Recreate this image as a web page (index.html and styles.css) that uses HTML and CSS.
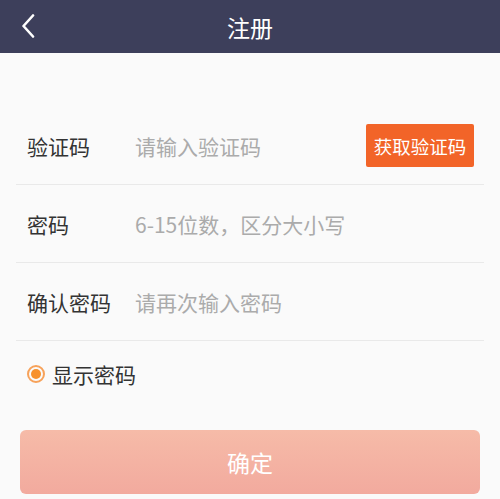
FILE: index.html
```html
<!DOCTYPE html>
<html lang="zh-CN">
<head>
  <meta charset="UTF-8">
  <title>注册</title>
  <meta name="viewport" content="width=device-width, initial-scale=1">
  <link rel="stylesheet" href="styles.css">
</head>
<body>
  <header class="topbar">
    <a class="back" href="#">
      <svg width="14" height="24" viewBox="0 0 14 24"><path d="M12 1.5 L2.5 12 L12 22.5" fill="none" stroke="#fff" stroke-width="2.6" stroke-linecap="round" stroke-linejoin="round"/></svg>
    </a>
    <h1>注册</h1>
  </header>

  <form class="form">
    <div class="fields">
      <div class="row">
        <label>验证码</label>
        <input type="text" placeholder="请输入验证码">
        <button type="button" class="code-btn">获取验证码</button>
      </div>
      <div class="row">
        <label>密码</label>
        <input type="password" placeholder="6-15位数，区分大小写">
      </div>
      <div class="row">
        <label>确认密码</label>
        <input type="password" placeholder="请再次输入密码">
      </div>
      <div class="show-pwd">
        <span class="radio"></span>
        <span>显示密码</span>
      </div>
    </div>
    <button type="submit" class="submit">确定</button>
  </form>
</body>
</html>
```

FILE: styles.css
```css
body {
  margin: 0;
  background: #fafafa;
  font-family: "Noto Sans CJK SC", "Noto Sans", sans-serif;
}
.topbar {
  height: 53px;
  background: #3d3f5b;
  display: flex;
  align-items: center;
  justify-content: center;
  position: relative;
}
.topbar h1 {
  margin: 0;
  color: #fff;
  font-size: 23px;
  font-weight: normal;
}
.back {
  position: absolute;
  left: 21px;
  top: 14px;
  display: block;
  width: 14px;
  height: 24px;
}
.form {
  margin-top: 54px;
}
.fields {
  padding: 0 16px;
}
.row {
  height: 77px;
  border-bottom: 1px solid #e9e9e9;
  display: flex;
  align-items: center;
  padding-left: 11px;
}
.row label {
  width: 108px;
  flex-shrink: 0;
  font-size: 21px;
  color: #333;
}
.row input {
  flex: 1;
  min-width: 0;
  border: none;
  background: transparent;
  outline: none;
  padding: 0;
  font-family: inherit;
  font-size: 21px;
  color: #333;
}
.row input::placeholder {
  color: #ababab;
}
.code-btn {
  width: 108px;
  height: 43px;
  margin-right: 10px;
  border: none;
  border-radius: 2px;
  background: #f26428;
  color: #fff;
  font-family: inherit;
  font-size: 18.5px;
  padding: 0;
}
.show-pwd {
  height: 66px;
  display: flex;
  align-items: center;
  padding-left: 11px;
  font-size: 21px;
  color: #333;
}
.radio {
  width: 14px;
  height: 14px;
  border: 2px solid #f7a25a;
  border-radius: 50%;
  margin-right: 7px;
  display: flex;
  align-items: center;
  justify-content: center;
}
.radio::after {
  content: "";
  width: 10px;
  height: 10px;
  border-radius: 50%;
  background: #f7912c;
}
.submit {
  display: block;
  width: 460px;
  height: 64px;
  margin: 23px 20px 0;
  border: none;
  border-radius: 6px;
  background: linear-gradient(#f6bba8, #f2aa9e);
  color: #fff;
  font-family: inherit;
  font-size: 23px;
}
```
